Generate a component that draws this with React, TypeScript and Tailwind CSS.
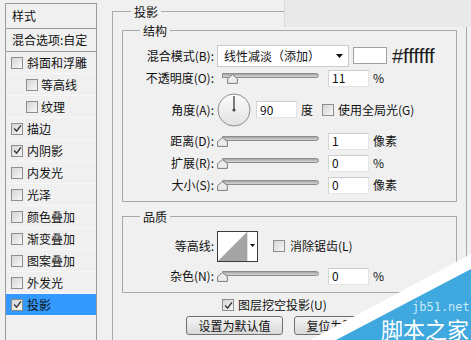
import React from 'react';

// Photoshop "图层样式" dialog – 投影 page

const effects = [
  { name: '斜面和浮雕' },
  { name: '等高线', indent: true },
  { name: '纹理', indent: true },
  { name: '描边', checked: true },
  { name: '内阴影', checked: true },
  { name: '内发光' },
  { name: '光泽' },
  { name: '颜色叠加' },
  { name: '渐变叠加' },
  { name: '图案叠加' },
  { name: '外发光' },
  { name: '投影', checked: true, active: true },
];

function Check({ checked = false }: { checked?: boolean }) {
  return (
    <span className="flex h-[12px] w-[12px] shrink-0 items-center justify-center border border-[#8e8e8e] bg-linear-to-br from-[#d4d4d4] to-[#f8f8f8]">
      {checked && (
        <svg width="9" height="9" viewBox="0 0 9 9">
          <path d="M1.2 4.6 L3.6 7.2 L7.9 1.4" fill="none" stroke="#3a3a3a" strokeWidth="1.5" />
        </svg>
      )}
    </span>
  );
}

function Slider({ pos }: { pos: number }) {
  return (
    <div className="relative h-[12px] w-[102px]">
      <div className="ml-[5px] mt-[2px] h-[5px] rounded-r-[3px] border border-[#8c8c8c] bg-linear-to-b from-[#a4a4a4] to-[#d6d6d6]" />
      <svg className="absolute top-[1px]" style={{ left: pos }} width="11" height="10" viewBox="0 0 11 10">
        <path d="M5.5 0.6 L10.4 4.6 L10.4 9.4 L0.6 9.4 L0.6 4.6 Z" fill="#ececec" stroke="#7c7c7c" />
      </svg>
    </div>
  );
}

function Field({ value }: { value: string }) {
  return (
    <div className="flex h-[17px] w-[41px] items-center border border-[#e4e4e4] border-t-[#cdcdcd] border-l-[#d4d4d4] bg-white pl-[3px] text-[12px]">
      {value}
    </div>
  );
}

function Label({ children }: { children: React.ReactNode }) {
  return <div className="w-[91px] shrink-0 text-right text-[12px]">{children}</div>;
}

function SliderRow({ label, pos, value, unit }: { label: string; pos: number; value: string; unit: string }) {
  return (
    <div className="flex h-[22px] items-center">
      <Label>{label}</Label>
      <div className="ml-[3px]">
        <Slider pos={pos} />
      </div>
      <div className="ml-[9px]">
        <Field value={value} />
      </div>
      <span className="ml-[4px] text-[12px]">{unit}</span>
    </div>
  );
}

function Button({ children }: { children: React.ReactNode }) {
  return (
    <button className="h-[19px] w-[97px] rounded-[3px] border border-[#707070] bg-linear-to-b from-[#f4f4f4] to-[#d9d9d9] text-[12px] leading-none text-[#111]">
      {children}
    </button>
  );
}

export default function App() {
  return (
    <div className="relative flex h-[340px] w-[471px] overflow-hidden bg-[#f0f0f0] font-['Noto_Sans_CJK_SC',sans-serif] text-[#111]">
      {/* left: style list */}
      <div className="ml-[5px] mt-[3px] h-[400px] w-[92px] shrink-0 border border-[#9b9b9b]">
        <div className="flex h-[25px] items-center border-b border-[#9b9b9b] pl-[6px] text-[12px]">样式</div>
        <div className="flex h-[23px] items-center border-b border-[#9b9b9b] pl-[6px] text-[12px]">混合选项:自定</div>
        {effects.map((e) => (
          <div
            key={e.name}
            className={
              'flex h-[22px] items-center border-b border-[#f7f7f7] text-[12px] ' +
              (e.indent ? 'gap-[3px] pl-[20px] ' : 'gap-[4px] pl-[5px] ') +
              (e.active ? 'bg-[#3399ff]' : '')
            }
          >
            <Check checked={e.checked} />
            <span>{e.name}</span>
          </div>
        ))}
      </div>

      {/* right: drop shadow settings */}
      <fieldset className="ml-[15px] mt-[3px] h-[380px] w-[355px] shrink-0 border border-[#a8a8a8] px-[9px] pt-[2px]">
        <legend className="ml-[9px] px-[3px] text-[12px] leading-[17px]">投影</legend>

        <fieldset className="border border-[#a8a8a8] pb-[5px] pt-[5px]">
          <legend className="ml-[17px] px-[3px] text-[12px] leading-[17px]">结构</legend>

          <div className="flex h-[23px] items-center">
            <Label>混合模式(B):</Label>
            <div className="ml-[3px] flex h-[22px] w-[132px] items-center justify-between border border-[#cbcbcb] bg-white pl-[6px] pr-[5px] text-[12px]">
              <span>线性减淡（添加）</span>
              <svg width="7" height="4" viewBox="0 0 7 4">
                <path d="M0 0 H7 L3.5 4 Z" fill="#111" />
              </svg>
            </div>
            <div className="ml-[4px] h-[17px] w-[34px] border border-[#a0a0a0] bg-white" />
            <span className="ml-[5px] font-['Liberation_Sans',sans-serif] text-[20px] leading-none text-[#1a1a1a]">#ffffff</span>
          </div>

          <div className="flex h-[22px] items-center">
            <Label>不透明度(O):</Label>
            <div className="ml-[3px]">
              <Slider pos={10} />
            </div>
            <div className="ml-[9px]">
              <Field value="11" />
            </div>
            <span className="ml-[4px] text-[12px]">%</span>
          </div>

          <div className="flex h-[41px] items-center">
            <Label>角度(A):</Label>
            <svg className="ml-[3px]" width="34" height="34" viewBox="0 0 34 34">
              <defs>
                <linearGradient id="dial" x1="0" y1="0" x2="0" y2="1">
                  <stop offset="0" stopColor="#fbfbfb" />
                  <stop offset="1" stopColor="#e2e2e2" />
                </linearGradient>
              </defs>
              <circle cx="17" cy="17" r="16" fill="url(#dial)" stroke="#8c8c8c" />
              <line x1="17" y1="3" x2="17" y2="17" stroke="#4a4a4a" strokeWidth="1.4" />
              <circle cx="17" cy="17" r="1.6" fill="#4a4a4a" />
            </svg>
            <div className="ml-[5px]">
              <Field value="90" />
            </div>
            <span className="ml-[4px] text-[12px]">度</span>
            <div className="ml-[9px] flex items-center gap-[4px] text-[12px]">
              <Check />
              <span>使用全局光(G)</span>
            </div>
          </div>

          <SliderRow label="距离(D):" pos={0} value="1" unit="像素" />
          <SliderRow label="扩展(R):" pos={0} value="0" unit="%" />
          <SliderRow label="大小(S):" pos={0} value="0" unit="像素" />
        </fieldset>

        <fieldset className="mt-[6px] border border-[#a8a8a8] pb-[5px] pt-[5px]">
          <legend className="ml-[17px] px-[3px] text-[12px] leading-[17px]">品质</legend>

          <div className="flex h-[32px] items-center">
            <Label>等高线:</Label>
            <div className="ml-[3px] flex h-[31px] w-[41px] border border-[#3a3a3a] bg-white">
              <svg width="29" height="29" viewBox="0 0 29 29">
                <polygon points="0,29 29,0 29,29" fill="#a4a4a4" />
              </svg>
              <div className="flex flex-1 justify-center border-l border-[#e0e0e0] pt-[12px]">
                <svg width="5" height="3" viewBox="0 0 5 3">
                  <path d="M0 0 H5 L2.5 3 Z" fill="#111" />
                </svg>
              </div>
            </div>
            <div className="ml-[15px] flex items-center gap-[5px] text-[12px]">
              <Check />
              <span>消除锯齿(L)</span>
            </div>
          </div>

          <div className="mt-[3px]">
            <SliderRow label="杂色(N):" pos={0} value="0" unit="%" />
          </div>
        </fieldset>

        <div className="ml-[100px] mt-[4px] flex h-[16px] items-center gap-[4px] text-[12px]">
          <Check checked />
          <span>图层挖空投影(U)</span>
        </div>

        <div className="ml-[64px] mt-[3px] flex gap-[11px]">
          <Button>设置为默认值</Button>
          <Button>复位为默认值</Button>
        </div>
      </fieldset>

      {/* smudged strip at the top right of the screenshot */}
      <div className="absolute left-[284px] top-0 h-[27px] w-[187px] border-l border-[#dadada] bg-[#e9e9e9]" />

      {/* jb51.net watermark */}
      <svg className="absolute bottom-0 right-0" width="161" height="86" viewBox="0 0 161 86">
        <polygon points="0,86 161,0 161,86" fill="#ffffff" />
        <polygon points="26,86 161,15 161,86" fill="#3fa8de" />
      </svg>
      <span className="absolute left-[412px] top-[301px] font-['DejaVu_Sans_Mono',monospace] text-[12px] leading-none text-[#c9ebfa]">
        jb51.net
      </span>
      <span className="absolute left-[381px] top-[317px] text-[22px] leading-none text-white">脚本之家</span>
    </div>
  );
}
